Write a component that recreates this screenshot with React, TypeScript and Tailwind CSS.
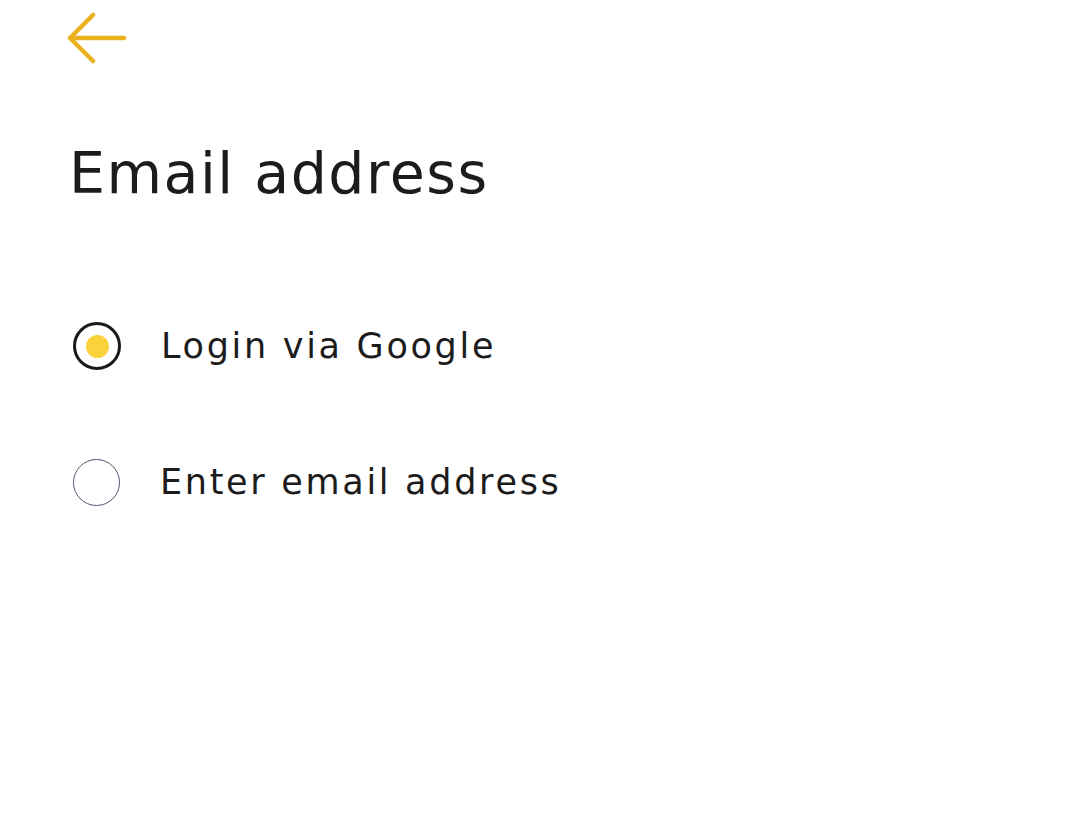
import { useState } from 'react'

const font = { fontFamily: '"DejaVu Sans", "Noto Sans", sans-serif' }

function Radio({ checked }: { checked: boolean }) {
  return checked ? (
    <span className="flex h-[48px] w-[48px] shrink-0 items-center justify-center rounded-full border-[3px] border-[#1a1a1a]">
      <span className="h-[23px] w-[23px] rounded-full bg-[#f9d23c]" />
    </span>
  ) : (
    <span className="block h-[47px] w-[47px] shrink-0 rounded-full border border-[#55556e]" />
  )
}

export default function App() {
  const [choice, setChoice] = useState<'google' | 'email'>('google')

  return (
    <div className="min-h-[832px] w-[1080px] bg-white text-[#1c1c1c]" style={font}>
      <div className="flex flex-col pl-[67px]">
        <button className="mt-[12px] h-[52px] w-[60px]" aria-label="Back">
          <svg width="60" height="52" viewBox="0 0 60 52" fill="none">
            <path
              d="M3 26 H57 M3 26 L26 3 M3 26 L26 49"
              stroke="#ebb21f"
              strokeWidth="4.5"
              strokeLinecap="round"
              strokeLinejoin="round"
            />
          </svg>
        </button>

        <h1 className="mt-[75px] pl-[2px] text-[57px] leading-[68px] font-normal tracking-[1.5px]">
          Email address
        </h1>

        <div className="mt-[115px] flex flex-col gap-[88px] pl-[6px]">
          {(
            [
              ['google', 'Login via Google'],
              ['email', 'Enter email address'],
            ] as const
          ).map(([key, label]) => (
            <button
              key={key}
              onClick={() => setChoice(key)}
              className="flex items-center gap-[40px] text-left"
            >
              <Radio checked={choice === key} />
              <span className="text-[35px] leading-[48px] tracking-[2.7px]">{label}</span>
            </button>
          ))}
        </div>
      </div>
    </div>
  )
}
